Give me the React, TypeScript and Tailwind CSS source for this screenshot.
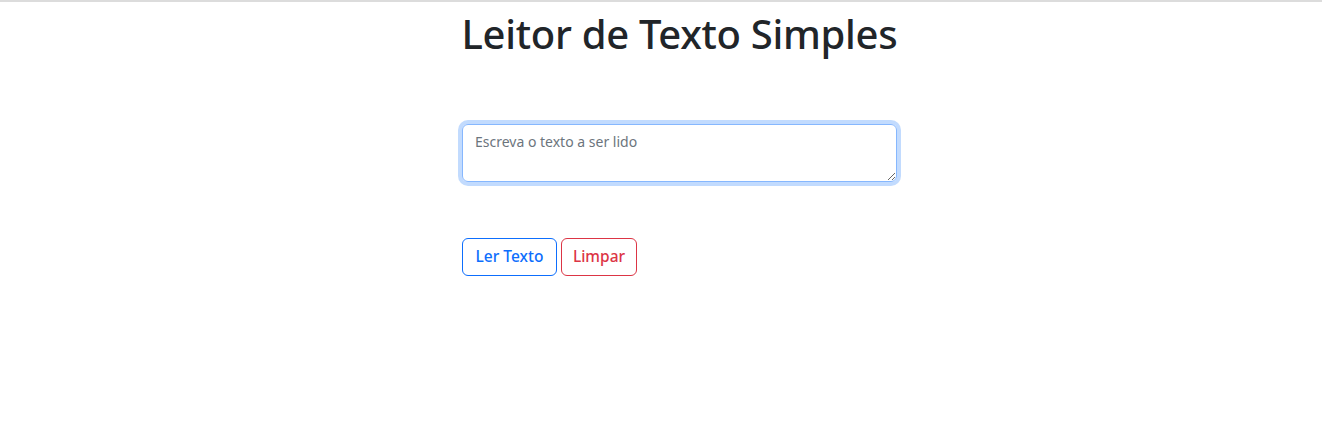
export default function App() {
  return (
    <div className="min-h-[440px] bg-white border-t-2 border-[#dcdcdc] text-[#212529]" style={{ fontFamily: '"Noto Sans", "Open Sans", sans-serif' }}>
      <div className="ml-[462px] w-[435px]">
        <h1 className="text-center whitespace-nowrap -mx-[10px] text-[40px] leading-[48px] font-medium mt-[8px] tracking-[-0.3px]">Leitor de Texto Simples</h1>
        <div className="mt-[66px]">
          <textarea
            placeholder="Escreva o texto a ser lido"
            className="block w-full h-[58px] rounded-[6px] border border-[#86b7fe] outline-none ring-4 ring-[#0d6efd]/25 px-[12px] py-[7px] text-[14px] leading-[20px] placeholder:text-[#6c757d] resize-y"
          />
        </div>
        <div className="mt-[56px] flex gap-[4px]">
          <button className="h-[38px] w-[95px] rounded-[6px] border border-[#0d6efd] text-[#0d6efd] text-[15.5px] font-medium">Ler Texto</button>
          <button className="h-[38px] w-[76px] rounded-[6px] border border-[#dc3545] text-[#dc3545] text-[15.5px] font-medium">Limpar</button>
        </div>
      </div>
    </div>
  );
}
